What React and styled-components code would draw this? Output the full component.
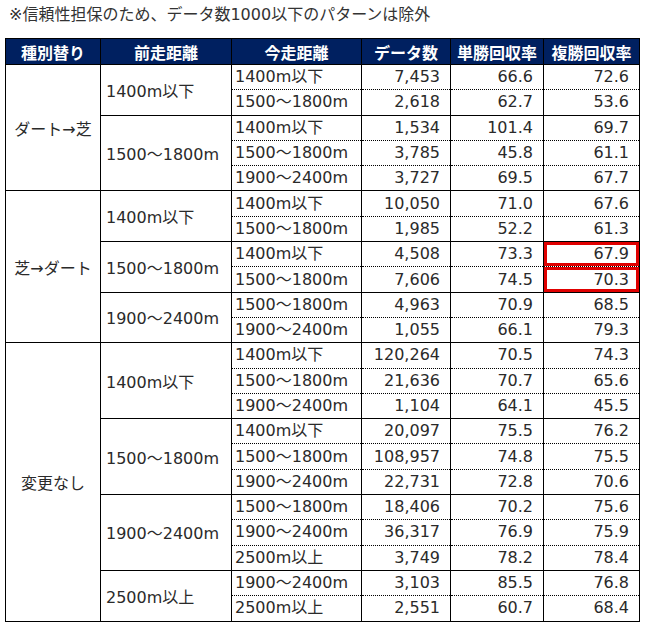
import React from 'react';
import styled, { createGlobalStyle } from 'styled-components';

const GlobalStyle = createGlobalStyle`
  body {
    margin: 0;
    background: #fff;
    font-family: "DejaVu Sans", "Noto Sans CJK JP", sans-serif;
    color: #2a2a2a;
  }
`;

const Page = styled.div`
  padding: 4px 0 0 5px;
`;

const Note = styled.p`
  margin: 0 0 12px 4px;
  font-size: 16px;
  line-height: 22px;
  color: #333;
`;

const Table = styled.table`
  border-collapse: collapse;
  table-layout: fixed;
  width: 634px;
  font-size: 16px;
  border: 1px solid #000;
`;

const HeadCell = styled.th`
  background: #002060;
  color: #fff;
  font-weight: bold;
  text-align: center;
  height: 25px;
  padding: 0;
  border: 1px solid #000;
  white-space: nowrap;
`;

const Row = styled.tr`
  height: 25.3px;
`;

const GroupCell = styled.td`
  text-align: ${p => (p.$center ? 'center' : 'left')};
  padding: 0 0 0 ${p => (p.$center ? '0' : '5px')};
  vertical-align: middle;
  border: 1px solid #000;
  white-space: nowrap;
`;

const Tilde = styled.span`
  letter-spacing: -5px;
  margin-right: 5px;
`;

const Cell = styled.td`
  text-align: ${p => (p.$num ? 'right' : 'left')};
  padding: ${p => (p.$num ? '0 10px 0 0' : '0 0 0 3px')};
  border-left: 1px solid #000;
  border-right: 1px solid #000;
  border-top: 1px ${p => (p.$first ? 'solid' : 'dotted')} #000;
  border-bottom: 1px ${p => (p.$last ? 'solid' : 'dotted')} #000;
  white-space: nowrap;
  line-height: 20px;
  box-shadow: ${p => (p.$mark ? 'inset 0 0 0 3px #e00000' : 'none')};
`;

// split "1500～1800m" so the wave dash can be set a little narrower
const Dist = ({ text }) => {
  const parts = text.split('～');
  if (parts.length < 2) return text;
  return <>{parts[0]}<Tilde>～</Tilde>{parts[1]}</>;
};

const data = [
  {
    name: 'ダート→芝',
    groups: [
      { prev: '1400m以下', rows: [
        ['1400m以下', '7,453', '66.6', '72.6'],
        ['1500～1800m', '2,618', '62.7', '53.6'],
      ] },
      { prev: '1500～1800m', rows: [
        ['1400m以下', '1,534', '101.4', '69.7'],
        ['1500～1800m', '3,785', '45.8', '61.1'],
        ['1900～2400m', '3,727', '69.5', '67.7'],
      ] },
    ],
  },
  {
    name: '芝→ダート',
    groups: [
      { prev: '1400m以下', rows: [
        ['1400m以下', '10,050', '71.0', '67.6'],
        ['1500～1800m', '1,985', '52.2', '61.3'],
      ] },
      { prev: '1500～1800m', rows: [
        ['1400m以下', '4,508', '73.3', '67.9', true],
        ['1500～1800m', '7,606', '74.5', '70.3', true],
      ] },
      { prev: '1900～2400m', rows: [
        ['1500～1800m', '4,963', '70.9', '68.5'],
        ['1900～2400m', '1,055', '66.1', '79.3'],
      ] },
    ],
  },
  {
    name: '変更なし',
    groups: [
      { prev: '1400m以下', rows: [
        ['1400m以下', '120,264', '70.5', '74.3'],
        ['1500～1800m', '21,636', '70.7', '65.6'],
        ['1900～2400m', '1,104', '64.1', '45.5'],
      ] },
      { prev: '1500～1800m', rows: [
        ['1400m以下', '20,097', '75.5', '76.2'],
        ['1500～1800m', '108,957', '74.8', '75.5'],
        ['1900～2400m', '22,731', '72.8', '70.6'],
      ] },
      { prev: '1900～2400m', rows: [
        ['1500～1800m', '18,406', '70.2', '75.6'],
        ['1900～2400m', '36,317', '76.9', '75.9'],
        ['2500m以上', '3,749', '78.2', '78.4'],
      ] },
      { prev: '2500m以上', rows: [
        ['1900～2400m', '3,103', '85.5', '76.8'],
        ['2500m以上', '2,551', '60.7', '68.4'],
      ] },
    ],
  },
];

const widths = [95, 131, 130, 89, 93, 96];
const heads = ['種別替り', '前走距離', '今走距離', 'データ数', '単勝回収率', '複勝回収率'];

export default function App() {
  const body = [];
  data.forEach(kind => {
    const total = kind.groups.reduce((n, g) => n + g.rows.length, 0);
    kind.groups.forEach((g, gi) => {
      g.rows.forEach((r, ri) => {
        const first = ri === 0;
        const last = ri === g.rows.length - 1;
        body.push(
          <Row key={`${kind.name}-${gi}-${ri}`}>
            {gi === 0 && ri === 0 && <GroupCell $center rowSpan={total}>{kind.name}</GroupCell>}
            {ri === 0 && <GroupCell rowSpan={g.rows.length}><Dist text={g.prev} /></GroupCell>}
            <Cell $first={first} $last={last}><Dist text={r[0]} /></Cell>
            <Cell $num $first={first} $last={last}>{r[1]}</Cell>
            <Cell $num $first={first} $last={last}>{r[2]}</Cell>
            <Cell $num $first={first} $last={last} $mark={r[4]}>{r[3]}</Cell>
          </Row>
        );
      });
    });
  });

  return (
    <Page>
      <GlobalStyle />
      <Note>※信頼性担保のため、データ数1000以下のパターンは除外</Note>
      <Table>
        <colgroup>
          {widths.map((w, i) => <col key={i} style={{ width: w }} />)}
        </colgroup>
        <thead>
          <tr>
            {heads.map(h => <HeadCell key={h}>{h}</HeadCell>)}
          </tr>
        </thead>
        <tbody>{body}</tbody>
      </Table>
    </Page>
  );
}
